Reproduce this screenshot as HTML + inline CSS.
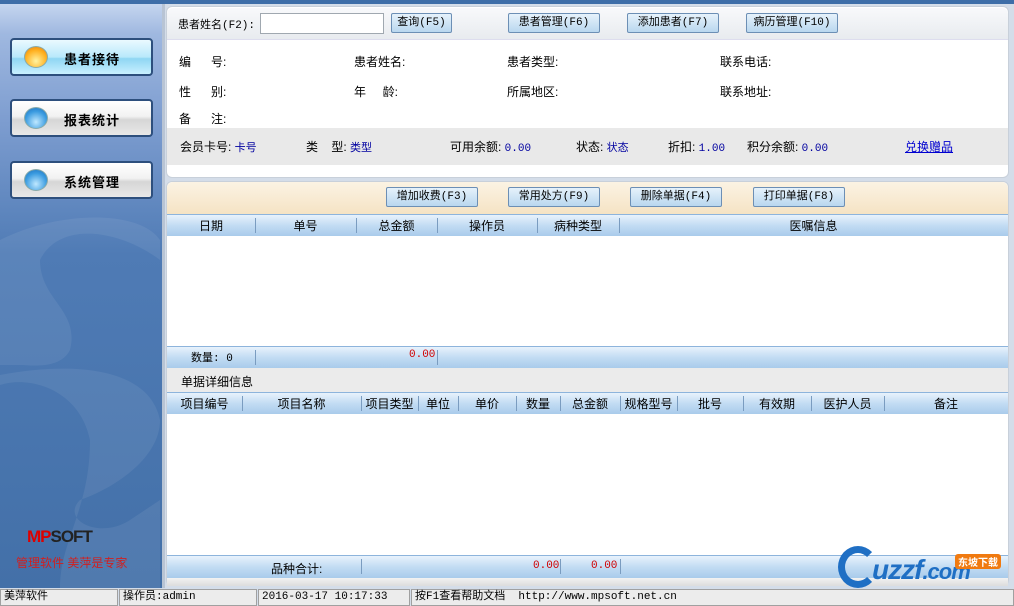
<!DOCTYPE html>
<html><head><meta charset="utf-8"><style>
*{margin:0;padding:0;box-sizing:border-box}
body{width:1014px;height:606px;overflow:hidden;background:#d4dde9;font-family:"Liberation Sans","Noto Sans CJK SC",sans-serif;font-size:12px;color:#000;position:relative}
.a{position:absolute}
.side{left:0;top:4px;width:162px;height:584px;background:linear-gradient(#c5d6ef 0,#9fb8e0 30px,#7c9ccf 120px,#4f7bb5 250px,#4370a8 100%)}
.sb{left:10px;width:143px;height:38px;border:2px solid #2d4f7d;border-radius:4px;background:linear-gradient(#fff,#f2f2f2 45%,#d6d6d6 55%,#e8e8e8);font-weight:bold;font-size:13px;letter-spacing:1px}
.sb span{position:absolute;left:52px;top:9px}
.sb i{position:absolute;left:12px;top:6px;width:24px;height:22px;border-radius:50%;background:radial-gradient(circle at 50% 70%,#bfe8ff,#3a9be0 60%,#1d6cb8);border:1px solid #8aa}
.sb.on{background:linear-gradient(#eafaff,#b9e9fb 50%,#8fd6f3 55%,#c9f0ff)}
.sb.on i{background:radial-gradient(circle at 50% 70%,#fff3a0,#ffb020 60%,#e07a10)}
.btn{height:20px;border:1px solid #6c8fb5;border-radius:2px;background:linear-gradient(#e6f2fb,#b9d7ef);font-family:"Liberation Mono","Noto Sans CJK SC",monospace;font-size:11px;line-height:18px;text-align:center}
.hdr{background:linear-gradient(#e8f2fc,#c2dcf3 50%,#a9cbeb);border-top:1px solid #8db4dc}
.col{top:3px;height:15px;border-left:1px solid #7a9cc0}
.hdr div.t{position:absolute;top:2px;text-align:center}
.blue{color:#0000a0;font-family:"Liberation Mono","Noto Sans CJK SC",monospace;font-size:11px}
.mono{font-family:"Liberation Mono","Noto Sans CJK SC",monospace;font-size:11px}
.st{top:589px;height:17px;border:1px solid #a0a0a0;background:#ececec;line-height:15px;padding-left:3px;font-family:"Liberation Mono","Noto Sans CJK SC",monospace;font-size:11px}
</style></head><body>
<div class="a" style="left:0;top:0;width:1014px;height:4px;background:#3e6ea8"></div>
<div class="a side"></div>
<svg class="a" style="left:0;top:200px" width="162" height="388"><path d="M0 40 C60 10 140 10 160 40 L160 60 C120 30 60 20 40 60 C40 100 80 110 70 150 C60 170 30 165 20 165 L0 165 Z" fill="#fff" opacity=".07"/><path d="M0 175 C80 160 150 170 160 220 C160 260 110 290 80 300 C60 320 100 340 130 320 L160 300 L160 388 L60 388 C60 340 90 310 90 240 C80 190 30 175 0 185Z" fill="#fff" opacity=".07"/></svg>
<div class="a sb on" style="top:38px"><i></i><span>患者接待</span></div>
<div class="a sb" style="top:99px"><i></i><span>报表统计</span></div>
<div class="a sb" style="top:161px"><i></i><span>系统管理</span></div>
<div class="a" style="left:27px;top:527px;font:bold 17px 'Liberation Sans',sans-serif;color:#222;letter-spacing:-1px"><span style="color:#d00">MP</span>SOFT</div>
<div class="a" style="left:16px;top:554px;color:#d02020;font-size:12px">管理软件 美萍是专家</div>
<div class="a" style="left:162px;top:4px;width:3px;height:584px;background:#b8c4d4"></div>

<div class="a" style="left:166px;top:6px;width:843px;height:172px;background:#fff;border:1px solid #c8d0da;border-radius:6px"></div>
<div class="a" style="left:167px;top:8px;width:841px;height:32px;background:linear-gradient(#f8f9fb,#e8ebef);border-radius:6px 6px 0 0;border-bottom:1px solid #dde"></div>
<div class="a mono" style="left:178px;top:16px">患者姓名(F2):</div>
<div class="a" style="left:260px;top:13px;width:124px;height:21px;border:1px solid #a0a8b0;background:#fff"></div>
<div class="a btn" style="left:391px;top:13px;width:61px">查询(F5)</div>
<div class="a btn" style="left:508px;top:13px;width:92px">患者管理(F6)</div>
<div class="a btn" style="left:627px;top:13px;width:92px">添加患者(F7)</div>
<div class="a btn" style="left:746px;top:13px;width:92px">病历管理(F10)</div>
<div class="a" style="left:179px;top:53px">编&nbsp;&nbsp;&nbsp;&nbsp;&nbsp;&nbsp;号:</div>
<div class="a" style="left:179px;top:83px">性&nbsp;&nbsp;&nbsp;&nbsp;&nbsp;&nbsp;别:</div>
<div class="a" style="left:179px;top:110px">备&nbsp;&nbsp;&nbsp;&nbsp;&nbsp;&nbsp;注:</div>
<div class="a" style="left:354px;top:53px">患者姓名:</div>
<div class="a" style="left:354px;top:83px">年&nbsp;&nbsp;&nbsp;&nbsp;&nbsp;龄:</div>
<div class="a" style="left:507px;top:53px">患者类型:</div>
<div class="a" style="left:507px;top:83px">所属地区:</div>
<div class="a" style="left:720px;top:53px">联系电话:</div>
<div class="a" style="left:720px;top:83px">联系地址:</div>
<div class="a" style="left:167px;top:128px;width:841px;height:37px;background:#e9e9e9"></div>
<div class="a" style="left:180px;top:138px">会员卡号: <span class="blue">卡号</span></div>
<div class="a" style="left:306px;top:138px">类&nbsp;&nbsp;&nbsp;&nbsp;型: <span class="blue">类型</span></div>
<div class="a" style="left:450px;top:138px">可用余额: <span class="blue">0.00</span></div>
<div class="a" style="left:576px;top:138px">状态: <span class="blue">状态</span></div>
<div class="a" style="left:668px;top:138px">折扣: <span class="blue">1.00</span></div>
<div class="a" style="left:747px;top:138px">积分余额: <span class="blue">0.00</span></div>
<div class="a" style="left:905px;top:138px;color:#0000d0;text-decoration:underline">兑换赠品</div>

<div class="a" style="left:166px;top:181px;width:843px;height:405px;background:#fff;border:1px solid #c8d0da;border-radius:6px"></div>
<div class="a" style="left:167px;top:182px;width:841px;height:32px;background:linear-gradient(#fbf3e4,#f5e3c4);border-radius:6px 6px 0 0"></div>
<div class="a btn" style="left:386px;top:187px;width:92px">增加收费(F3)</div>
<div class="a btn" style="left:508px;top:187px;width:92px">常用处方(F9)</div>
<div class="a btn" style="left:630px;top:187px;width:92px">删除单据(F4)</div>
<div class="a btn" style="left:753px;top:187px;width:92px">打印单据(F8)</div>

<div class="a hdr" style="left:167px;top:214px;width:841px;height:22px">
<div class="t" style="left:0;width:88px">日期</div><div class="a col" style="left:88px"></div>
<div class="t" style="left:88px;width:101px">单号</div><div class="a col" style="left:189px"></div>
<div class="t" style="left:189px;width:81px">总金额</div><div class="a col" style="left:270px"></div>
<div class="t" style="left:270px;width:100px">操作员</div><div class="a col" style="left:370px"></div>
<div class="t" style="left:370px;width:82px">病种类型</div><div class="a col" style="left:452px"></div>
<div class="t" style="left:452px;width:389px">医嘱信息</div>
</div>
<div class="a hdr" style="left:167px;top:346px;width:841px;height:22px">
<div class="t mono" style="left:24px">数量: 0</div><div class="a col" style="left:88px"></div>
<div class="t mono" style="left:242px;color:#d00000">0.00</div><div class="a col" style="left:270px"></div>
</div>
<div class="a" style="left:167px;top:368px;width:841px;height:24px;background:#ebebeb"></div>
<div class="a" style="left:181px;top:373px">单据详细信息</div>
<div class="a hdr" style="left:167px;top:392px;width:841px;height:22px">
<div class="t" style="left:0;width:75px">项目编号</div><div class="a col" style="left:75px"></div>
<div class="t" style="left:75px;width:119px">项目名称</div><div class="a col" style="left:194px"></div>
<div class="t" style="left:194px;width:57px">项目类型</div><div class="a col" style="left:251px"></div>
<div class="t" style="left:251px;width:40px">单位</div><div class="a col" style="left:291px"></div>
<div class="t" style="left:291px;width:58px">单价</div><div class="a col" style="left:349px"></div>
<div class="t" style="left:349px;width:44px">数量</div><div class="a col" style="left:393px"></div>
<div class="t" style="left:393px;width:60px">总金额</div><div class="a col" style="left:453px"></div>
<div class="t" style="left:453px;width:57px">规格型号</div><div class="a col" style="left:510px"></div>
<div class="t" style="left:510px;width:66px">批号</div><div class="a col" style="left:576px"></div>
<div class="t" style="left:576px;width:68px">有效期</div><div class="a col" style="left:644px"></div>
<div class="t" style="left:644px;width:73px">医护人员</div><div class="a col" style="left:717px"></div>
<div class="t" style="left:717px;width:124px">备注</div>
</div>
<div class="a hdr" style="left:167px;top:555px;width:841px;height:23px">
<div class="t" style="left:104px;top:4px">品种合计:</div><div class="a col" style="left:194px"></div>
<div class="t mono" style="left:366px;top:4px;color:#d00000">0.00</div><div class="a col" style="left:393px"></div>
<div class="t mono" style="left:424px;top:4px;color:#d00000">0.00</div><div class="a col" style="left:453px"></div>
</div>
<div class="a" style="left:167px;top:578px;width:841px;height:8px;background:linear-gradient(#f2f2f2,#dcdcdc)"></div>

<div class="a" style="left:838px;top:546px;width:40px;height:42px;border:7px solid #1f6fc4;border-radius:50%;border-right-color:transparent"></div>
<div class="a" style="left:872px;top:554px;font:bold italic 28px 'Liberation Sans',sans-serif;color:#1f6fc4;letter-spacing:-1px">uzzf<span style="font-size:22px">.com</span></div>
<div class="a" style="left:955px;top:554px;background:#f07a10;color:#fff;font-size:10px;font-weight:bold;padding:0 3px;border-radius:3px">东坡下载</div>

<div class="a st" style="left:0;width:118px">美萍软件</div>
<div class="a st" style="left:119px;width:138px">操作员:admin</div>
<div class="a st" style="left:258px;width:152px">2016-03-17 10:17:33</div>
<div class="a st" style="left:411px;width:603px">按F1查看帮助文档&nbsp; http://www.mpsoft.net.cn</div>
</body></html>
